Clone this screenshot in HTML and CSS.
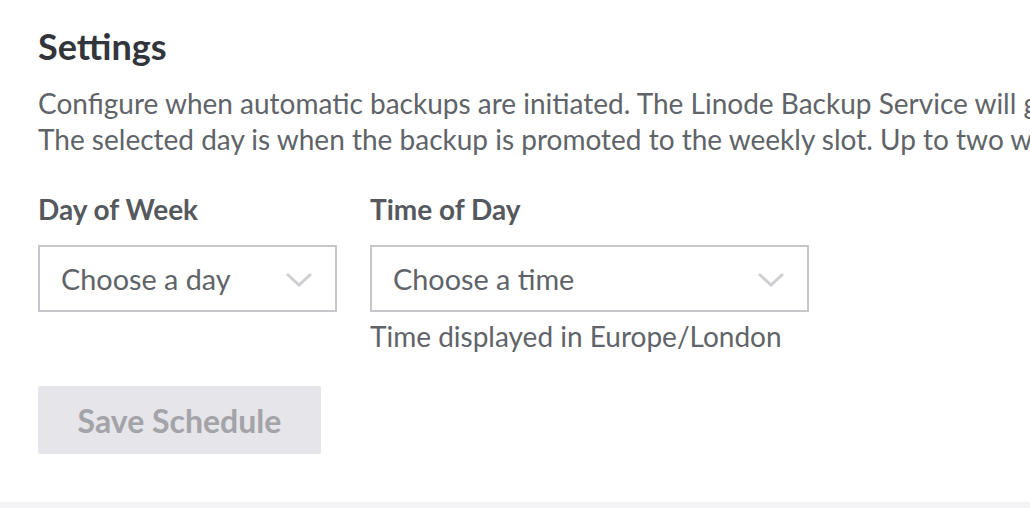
FILE: index.html
```html
<!DOCTYPE html>
<html lang="en">
<head>
  <meta charset="UTF-8">
  <meta name="viewport" content="width=device-width, initial-scale=1.0">
  <link rel="stylesheet" href="styles.css">
  <title>Backups - Settings</title>
</head>
<body>
  <div class="panel">
    <h2 class="title">Settings</h2>
    <p class="intro">
      Configure when automatic backups are initiated. The Linode Backup Service will generate a backup between the selected hours every day, and will overwrite the previous daily backup.<br>
      The selected day is when the backup is promoted to the weekly slot. Up to two weekly backups are saved.
    </p>

    <div class="fields">
      <div class="field">
        <label class="field-label" for="day">Day of Week</label>
        <div class="select select-day" id="day">
          <span class="select-value">Choose a day</span>
          <svg class="chevron" width="28" height="16" viewBox="0 0 28 16">
            <path d="M2 2 L14 13 L26 2" fill="none" stroke="#cfcfd3" stroke-width="3"/>
          </svg>
        </div>
      </div>

      <div class="field">
        <label class="field-label" for="time">Time of Day</label>
        <div class="select select-time" id="time">
          <span class="select-value">Choose a time</span>
          <svg class="chevron" width="28" height="16" viewBox="0 0 28 16">
            <path d="M2 2 L14 13 L26 2" fill="none" stroke="#cfcfd3" stroke-width="3"/>
          </svg>
        </div>
        <p class="helper">Time displayed in Europe/London</p>
      </div>
    </div>

    <button class="save-btn" disabled>Save Schedule</button>
  </div>
  <div class="footer-strip"></div>
</body>
</html>
```

FILE: styles.css
```css
html, body {
  margin: 0;
  padding: 0;
  height: 100%;
}

body {
  font-family: 'Lato', 'Open Sans', sans-serif;
  background-color: #fff;
  color: #606469;
  overflow: hidden;
  display: flex;
  flex-direction: column;
}

.panel {
  flex: 1;
  padding: 24px 0 0 38px;
}

.title {
  margin: 0;
  font-size: 36px;
  font-weight: 700;
  color: #32363c;
  line-height: 44px;
}

.intro {
  margin: 17px 0 0;
  font-size: 28px;
  line-height: 36px;
  white-space: nowrap;
}

.fields {
  display: flex;
  gap: 33px;
  margin-top: 36px;
}

.field {
  display: flex;
  flex-direction: column;
}

.field-label {
  font-size: 28px;
  font-weight: 700;
  color: #55595e;
  line-height: 32px;
  margin-bottom: 20px;
}

.select {
  box-sizing: border-box;
  height: 67px;
  border: 2px solid #c6c6cb;
  display: flex;
  align-items: center;
  justify-content: space-between;
  padding: 0 22px 0 21px;
}

.select-day {
  width: 299px;
}

.select-time {
  width: 439px;
}

.select-value {
  font-size: 28.8px;
  color: #606469;
}

.chevron {
  margin-top: 2px;
}

.helper {
  margin: 6px 0 0;
  font-size: 28px;
  line-height: 36px;
}

.save-btn {
  margin-top: 32px;
  width: 283px;
  height: 68px;
  border: none;
  border-radius: 2px;
  background-color: #e5e5ea;
  color: #a3a3a8;
  font-family: 'Lato', 'Open Sans', sans-serif;
  font-size: 32px;
  font-weight: 700;
}

.footer-strip {
  height: 6px;
  background-color: #f4f4f6;
}
```
